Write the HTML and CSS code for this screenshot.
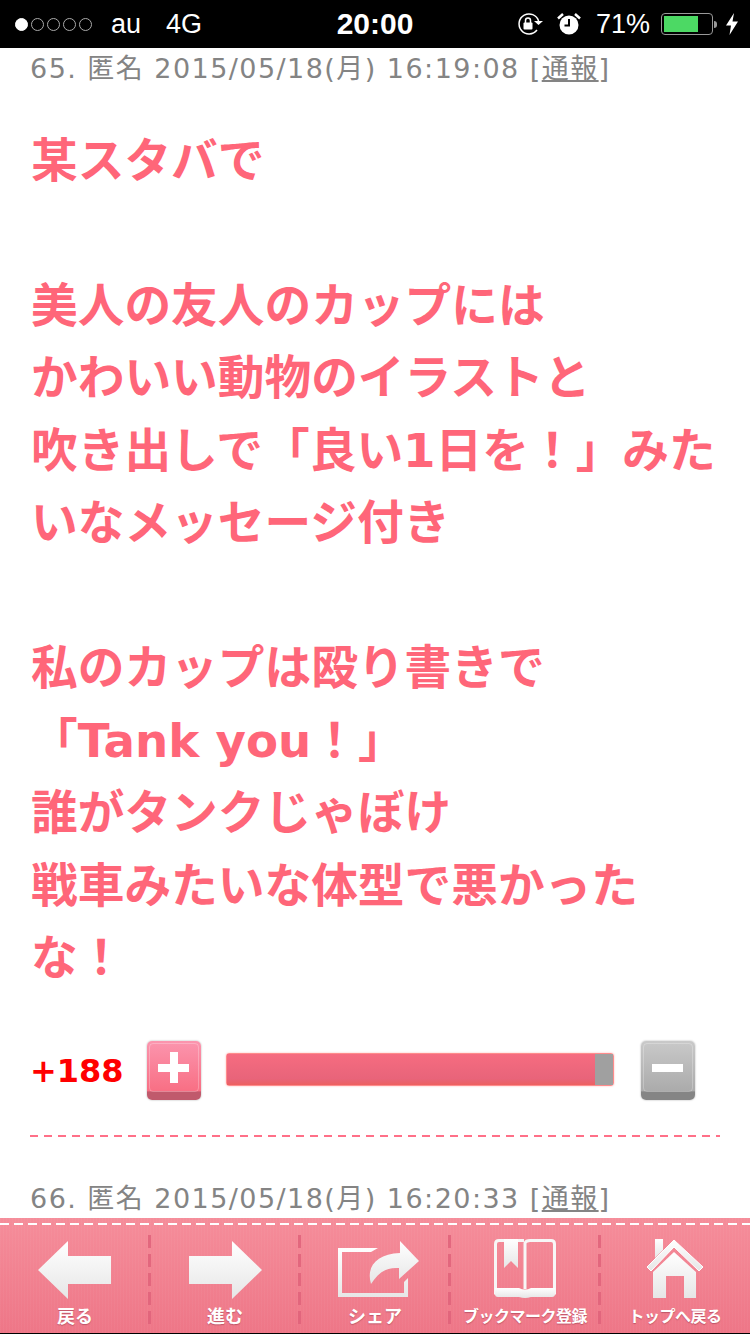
FILE: index.html
```html
<!DOCTYPE html>
<html lang="ja">
  <head>
    <meta charset="UTF-8" />
    <title>コメント</title>
    <link rel="stylesheet" href="styles.css">
  </head>
  <body>
    <div class="statusbar">
      <div class="status-left">
        <span class="signal"><i class="on"></i><i></i><i></i><i></i><i></i></span>
        <span class="carrier">au</span>
        <span class="network">4G</span>
      </div>
      <div class="status-time">20:00</div>
      <div class="status-right">
        <svg class="ico-lock" width="28" height="24" viewBox="0 0 28 24">
          <path d="M21 18a10 10 0 1 1 1.6-9" fill="none" stroke="#fff" stroke-width="1.5"/>
          <path d="M18 9h9l-4.500 4z" fill="#fff"/>
          <rect x="7.500" y="10.500" width="9" height="7" rx="1" fill="#fff"/>
          <path d="M9.500 11V8.500a2.500 2.500 0 0 1 5 0V11" fill="none" stroke="#fff" stroke-width="1.500"/>
        </svg>
        <svg class="ico-alarm" width="24" height="24" viewBox="0 0 24 24">
          <circle cx="12" cy="13" r="9.500" fill="#fff"/>
          <path d="M12 7v6.500H7.500" fill="none" stroke="#000" stroke-width="2"/>
          <path d="M1 6.500 6 2M23 6.500 18 2" stroke="#fff" stroke-width="2.500"/>
        </svg>
        <span class="battery-pct">71%</span>
        <span class="battery"><span class="battery-fill"></span></span>
        <span class="battery-tip"></span>
        <svg class="ico-bolt" width="12" height="22" viewBox="0 0 12 22">
          <path d="M8 0 0 12.500h5L3.500 22 12 8.500H6.500z" fill="#fff"/>
        </svg>
      </div>
    </div>

    <div class="content">
      <div class="comment-head">65. 匿名 2015/05/18(月) 16:19:08 [<u>通報</u>]</div>
      <div class="comment-body">某スタバで<br><br>美人の友人のカップには<br>かわいい動物のイラストと<br>吹き出しで「良い1日を！」みた<br>いなメッセージ付き<br><br>私のカップは殴り書きで<br>「Tank you！」<br>誰がタンクじゃぼけ<br>戦車みたいな体型で悪かった<br>な！</div>

      <div class="vote">
        <div class="score">+188</div>
        <div class="vote-btn plus"><span class="bar-h"></span><span class="bar-v"></span></div>
        <div class="meter"><div class="meter-fill"></div><div class="meter-rest"></div></div>
        <div class="vote-btn minus"><span class="bar-h"></span></div>
      </div>

      <div class="divider"></div>

      <div class="comment-head next">66. 匿名 2015/05/18(月) 16:20:33 [<u>通報</u>]</div>
    </div>

    <div class="toolbar">
      <div class="tool">
        <svg width="76" height="58" viewBox="0 0 76 58">
          <defs>
            <linearGradient id="w" x1="0" y1="0" x2="0" y2="1">
              <stop offset="0" stop-color="#fff"/><stop offset="1" stop-color="#e6e6e6"/>
            </linearGradient>
          </defs>
          <path d="M1 29 31 0V15H74V43H31V58z" fill="url(#w)"/>
        </svg>
        <span class="tool-label">戻る</span>
      </div>
      <div class="tool">
        <svg width="76" height="58" viewBox="0 0 76 58">
          <path d="M75 29 45 0V15H2V43H45V58z" fill="url(#w)"/>
        </svg>
        <span class="tool-label">進む</span>
      </div>
      <div class="tool">
        <svg class="ico-share" width="82" height="58" viewBox="0 0 82 58">
          <path d="M0 7H40L33 11H4V52H66V41L70 37V56H0z" fill="url(#w)"/>
          <path d="M33 43C28 26 38 13 62 12V0L81 20 61 38V27C48 26 40 32 33 43z" fill="url(#w)"/>
        </svg>
        <span class="tool-label">シェア</span>
      </div>
      <div class="tool">
        <svg width="62" height="60" viewBox="0 0 62 60">
          <path d="M10 1.500H5Q1.500 1.500 1.500 5V54H25Q31 56 37 54H60.500V5Q60.500 1.500 57 1.500H36Q32 1.500 31 4V50M24 1.500H30" fill="none" stroke="#f7f7f7" stroke-width="3"/>
          <path d="M1 49H25Q31 52 37 49H61V55Q61 58 58 58H37Q31 60 25 58H4Q1 58 1 55z" fill="url(#w)"/>
          <path d="M10 0H24V29L17 22 10 29z" fill="url(#w)"/>
        </svg>
        <span class="tool-label wide">ブックマーク登録</span>
      </div>
      <div class="tool">
        <svg width="58" height="60" viewBox="0 0 58 60">
          <path d="M1 28 28 1 57 28 53 32 28 8 5 32z" fill="url(#w)" stroke="#fff" stroke-linejoin="round"/>
          <path d="M9 0H17V11L9 19z" fill="url(#w)"/>
          <path d="M28 13 50 33V59H38V37H20V59H7V33z" fill="url(#w)"/>
        </svg>
        <span class="tool-label wide">トップへ戻る</span>
      </div>
    </div>
  </body>
</html>
```
FILE: styles.css
```css
html, body {
  margin: 0;
  padding: 0;
}

body {
  width: 750px;
  height: 1334px;
  overflow: hidden;
  display: flex;
  flex-direction: column;
  background-color: #fff;
  font-family: "Noto Sans CJK JP", "DejaVu Sans", sans-serif;
}

.statusbar {
  height: 48px;
  flex: none;
  background-color: #000;
  color: #fff;
  display: flex;
  align-items: center;
  position: relative;
  font-family: "Liberation Sans", sans-serif;
  font-size: 27px;
}

.status-left {
  display: flex;
  align-items: center;
  padding-left: 15px;
}

.signal {
  display: flex;
  gap: 3px;
  margin-right: 19px;
}

.signal i {
  width: 13px;
  height: 13px;
  border: 1px solid #aaa;
  border-radius: 50%;
  box-sizing: border-box;
}

.signal i.on {
  background-color: #fff;
  border-color: #fff;
}

.network {
  margin-left: 25px;
}

.status-time {
  position: absolute;
  left: 0;
  right: 0;
  text-align: center;
  font-weight: bold;
  font-size: 30px;
}

.status-right {
  margin-left: auto;
  padding-right: 12px;
  display: flex;
  align-items: center;
}

.ico-alarm {
  margin-left: 13px;
}

.battery-pct {
  margin-left: 15px;
  font-size: 27px;
}

.battery {
  margin-left: 11px;
  width: 52px;
  height: 22px;
  border: 1px solid #999;
  border-radius: 4px;
  box-sizing: border-box;
  padding: 2px;
}

.battery-fill {
  display: block;
  width: 34px;
  height: 100%;
  background-color: #4cd964;
}

.battery-tip {
  width: 3px;
  height: 7px;
  margin-left: 1px;
  background-color: #999;
  border-radius: 0 3px 3px 0;
}

.ico-bolt {
  margin-left: 9px;
}

.content {
  flex: 1;
  padding: 0 30px;
  overflow: hidden;
}

.comment-head {
  color: #848484;
  font-size: 27px;
  line-height: 38px;
  white-space: nowrap;
  font-family: "DejaVu Sans", "Noto Sans CJK JP", sans-serif;
  letter-spacing: 1.45px;
}

.comment-head u {
  font-family: "Noto Sans CJK JP", sans-serif;
}

.comment-body {
  margin: 37px 0 0 1px;
  color: #ff6679;
  font-size: 46.700px;
  font-weight: bold;
  line-height: 72.450px;
  white-space: nowrap;
  font-family: "DejaVu Sans", "Noto Sans CJK JP", sans-serif;
}

.vote {
  display: flex;
  align-items: flex-start;
  margin-top: 47px;
}

.score {
  width: 117px;
  color: #f00;
  font-size: 32px;
  font-weight: bold;
  line-height: 60px;
  font-family: "DejaVu Sans", sans-serif;
}

.vote-btn {
  width: 54px;
  height: 59px;
  box-sizing: border-box;
  border-radius: 5px;
  position: relative;
  box-shadow: 0 0 2px rgba(0, 0, 0, 0.35);
}

/* inner lighter edge on the button face */
.vote-btn::after {
  content: "";
  position: absolute;
  left: 2px;
  right: 2px;
  top: 2px;
  height: 47px;
  border: 1px solid rgba(255, 255, 255, 0.25);
  border-radius: 4px;
}

.plus {
  background: linear-gradient(#fb95ae, #f86f84 85%, #c05a6c 86%, #c05a6c);
}

.minus {
  background: linear-gradient(#c9c9c9, #ababab 85%, #858585 86%, #858585);
}

.bar-h,
.bar-v {
  position: absolute;
  background-color: #fff;
}

.bar-h {
  left: 11px;
  top: 23px;
  width: 31px;
  height: 8px;
}

.bar-v {
  left: 23px;
  top: 11px;
  width: 8px;
  height: 31px;
}

.meter {
  margin: 12px 27px 0 25px;
  width: 388px;
  height: 33px;
  box-sizing: border-box;
  border: 1px solid #ff8c8c;
  border-radius: 3px;
  box-shadow: 0 0 2px #ffb4b4;
  display: flex;
}

.meter-fill {
  flex: 1;
  background: linear-gradient(#f66c80, #e8647a 80%, #ed6060);
}

.meter-rest {
  width: 18px;
  background-color: #a0a0a0;
}

.divider {
  margin-top: 34px;
  width: 690px;
  height: 2px;
  background-image: linear-gradient(to right, #ff7088 8px, transparent 8px);
  background-size: 14px 2px;
}

.comment-head.next {
  margin-top: 41px;
}

.toolbar {
  height: 116px;
  flex: none;
  box-sizing: border-box;
  padding-top: 16px;
  background-color: #f3808f;
  background-image:
    repeating-linear-gradient(90deg, rgba(255, 255, 255, 0.03) 0 1px, transparent 1px 3px),
    linear-gradient(#f58d9a, #ee7687);
  border-bottom: 1px solid #000;
  position: relative;
  display: flex;
}

.toolbar::before {
  content: "";
  position: absolute;
  left: 0;
  right: 0;
  top: 5px;
  height: 2px;
  background-image: linear-gradient(to right, #fff 9px, transparent 9px);
  background-size: 14px 2px;
}

.tool {
  flex: 1;
  display: flex;
  flex-direction: column;
  align-items: center;
  justify-content: flex-end;
  padding-bottom: 3px;
  box-sizing: border-box;
  height: 96px;
  position: relative;
}

.tool + .tool::before {
  content: "";
  position: absolute;
  left: -2px;
  top: 1px;
  width: 3px;
  height: 90px;
  background-image: linear-gradient(#e0627a 13px, transparent 13px);
  background-size: 3px 19px;
  opacity: 0.85;
}

.ico-share {
  margin-left: 8px;
}

.tool-label {
  color: #fff;
  font-size: 18px;
  font-weight: bold;
  line-height: 24px;
  margin-top: 4px;
  white-space: nowrap;
  text-shadow: 0 1px 1px rgba(160, 60, 80, 0.6);
}

.tool-label.wide {
  font-size: 16px;
  letter-spacing: -0.5px;
}
```
